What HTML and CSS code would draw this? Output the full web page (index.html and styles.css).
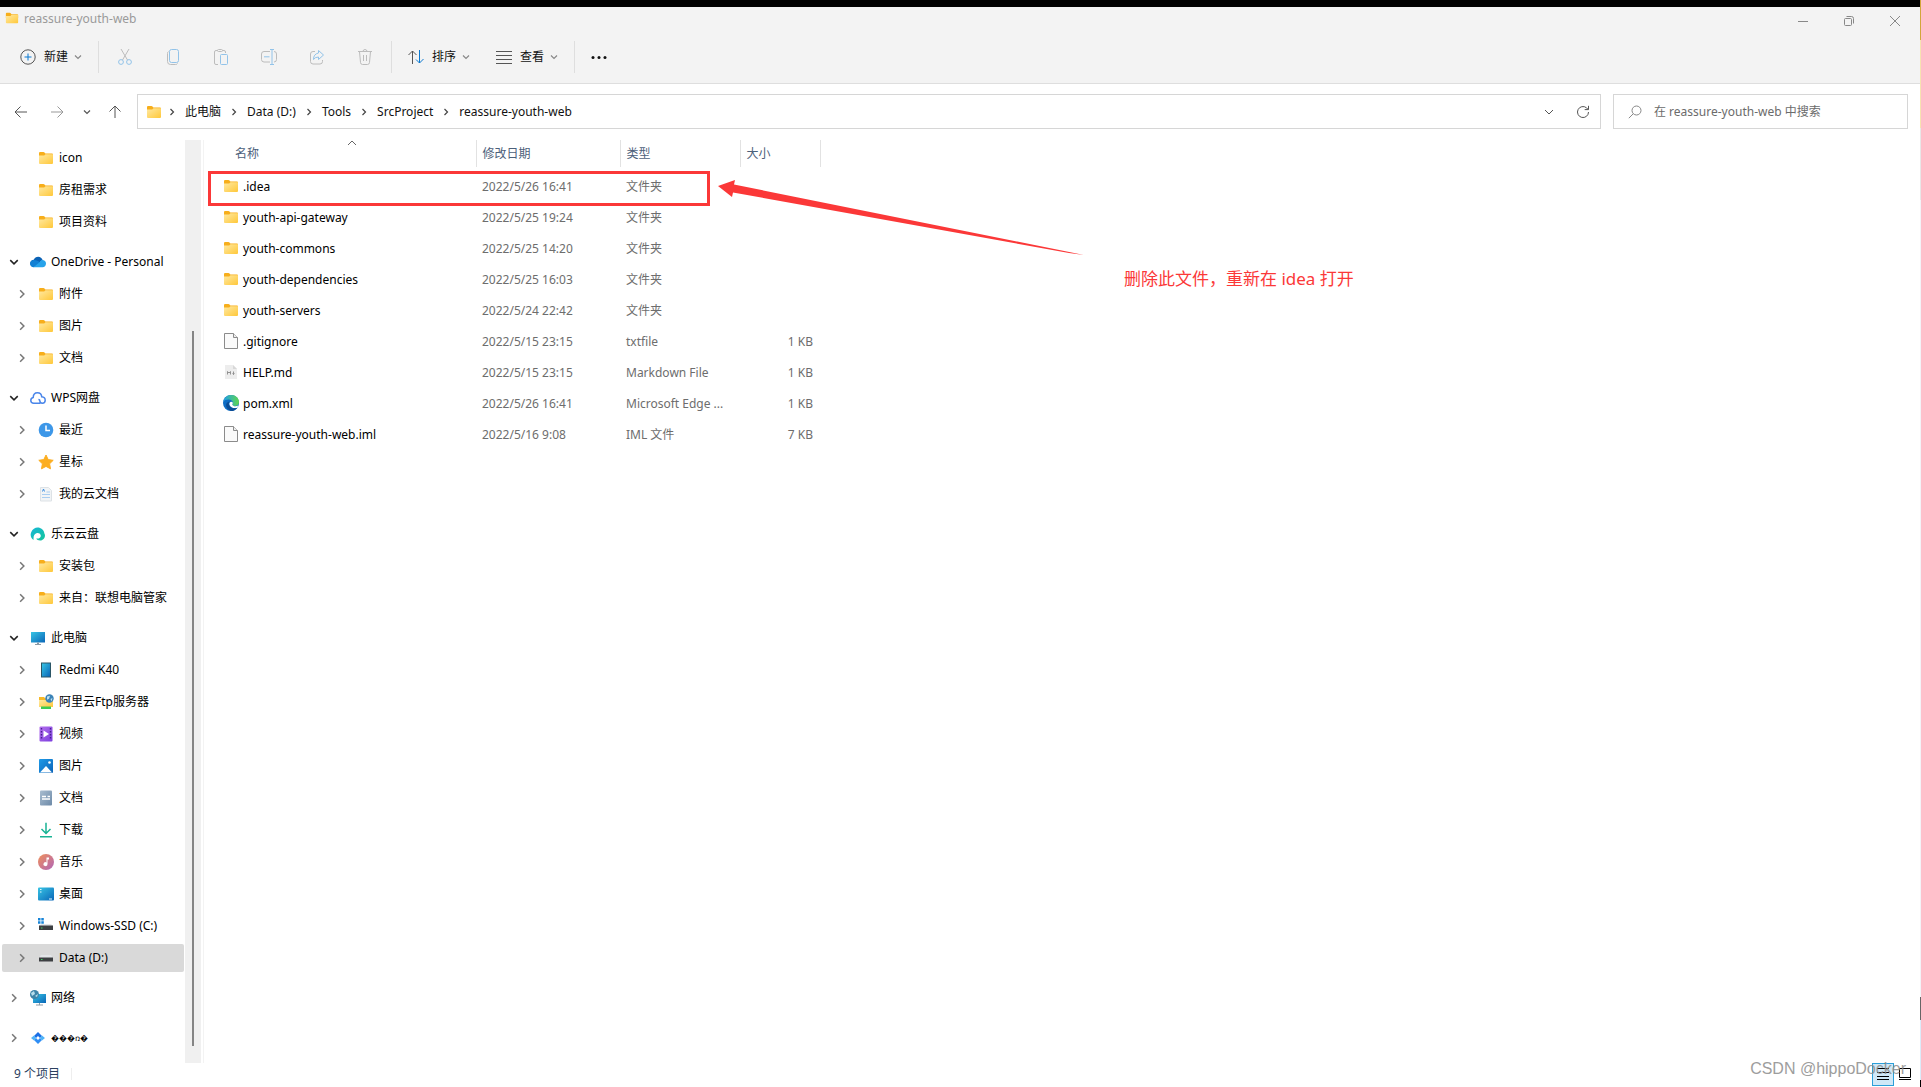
FILE: index.html
```html
<!DOCTYPE html>
<html lang="zh-CN">
<head>
<meta charset="utf-8">
<title>reassure-youth-web</title>
<link rel="stylesheet" href="styles.css">
</head>
<body>
<svg class="sprite" aria-hidden="true">
  <defs>
    <linearGradient id="gFolder" x1="0" y1="0" x2="1" y2="1"><stop offset="0" stop-color="#ffe9a2"/><stop offset="1" stop-color="#ffc83a"/></linearGradient>
    <linearGradient id="gBlue" x1="0" y1="0" x2="1" y2="1"><stop offset="0" stop-color="#37c4e4"/><stop offset="1" stop-color="#0a66b8"/></linearGradient>
    <linearGradient id="gSky" x1="0" y1="0" x2="1" y2="1"><stop offset="0" stop-color="#1e9be8"/><stop offset="1" stop-color="#0c63b8"/></linearGradient>
    <linearGradient id="gPurple" x1="0" y1="0" x2="1" y2="1"><stop offset="0" stop-color="#b470ee"/><stop offset="1" stop-color="#7b3ddd"/></linearGradient>
    <linearGradient id="gMusic" x1="0" y1="0" x2="1" y2="1"><stop offset="0" stop-color="#f0905a"/><stop offset="1" stop-color="#b065b8"/></linearGradient>
    <linearGradient id="gTeal" x1="0" y1="0" x2="1" y2="1"><stop offset="0" stop-color="#16b6d8"/><stop offset="1" stop-color="#14c69a"/></linearGradient>
    <linearGradient id="gEdge" x1="0" y1="0" x2="1" y2="0"><stop offset="0" stop-color="#1f9fe6"/><stop offset="1" stop-color="#5fd74e"/></linearGradient>
    <linearGradient id="gSlate" x1="0" y1="0" x2="1" y2="1"><stop offset="0" stop-color="#a9bdd0"/><stop offset="1" stop-color="#6d8aa8"/></linearGradient>
  </defs>
  <symbol id="folder" viewBox="0 0 16 16"><path d="M1 3.200q0-1.200 1-1.200h3.500q.5 0 1 .6l.9 1h6.600q1 0 1 1V8H1z" fill="#f7ae1b"/><path d="M1 5.600h5.200l1.300-1.300H15v8.700q0 .9-1 .9H2q-1 0-1-.9z" fill="url(#gFolder)"/></symbol>
  <symbol id="page" viewBox="0 0 16 16"><path d="M1.500.5h9l4 4v11h-13z" fill="#fafafa" stroke="#8b8b8b"/><path d="M10.500.5v4h4" fill="#eee" stroke="#8b8b8b"/></symbol>
  <symbol id="md" viewBox="0 0 16 16"><path d="M2 1h8l4 4v10H2z" fill="#ededed"/><path d="M10 1v4h4z" fill="#d8d8d8"/><path d="M4.500 10.500v-3l1.500 1.500 1.500-1.500v3M10.500 7.500v3M9.500 9.500l1 1 1-1" fill="none" stroke="#888" stroke-width=".9"/></symbol>
  <symbol id="edge" viewBox="0 0 16 16"><circle cx="8" cy="8" r="8" fill="#0d6cc4"/><path d="M.3 6.500C1.500 2 5 0 8.200 0 13 0 16 3.600 16 7c0 2.500-1.800 4-4 4-1.700 0-2.600-.7-2.600-1.300 0-.4.500-.7.500-1.700C9.900 6 8 4.600 5.600 4.600c-2.300 0-4.300.9-5.300 1.900z" fill="url(#gEdge)"/><path d="M6.500 6.400c-1 1-.9 2.800 0 4.300 1.400 2.300 4.500 3.200 7.800 2.200C12.700 15 10.500 16 8 16c-3-1-5-3.400-4.900-6 .1-1.700 1.400-3.300 3.400-3.600z" fill="#0b4c94"/><path d="M9.300 9.500c.5 1.900 3.500 2.400 6 1l-1 2.200c-3 1-6.400.2-7.600-2.400C6 8.800 6.500 7 8 6.800c1.300-.1 2 .7 1.800 1.500-.2.600-.6.800-.5 1.200z" fill="#fff"/></symbol>
  <symbol id="onedrive" viewBox="0 0 16 16"><path d="M4.500 12.500C1.800 12.500.3 11 .3 9.200c0-2 1.700-3.400 3.400-3.400C4.600 3.800 6.200 2.700 8.200 2.700c2.100 0 3.800 1.300 4.400 3.200z" fill="#0a62b5"/><path d="M3.700 13.300C1.500 13.300 0 11.600 0 9.700 0 7.500 1.700 6 3.700 6c3 0 5.300 1.500 8.900 3.800z" fill="#1180d4"/><path d="M3.500 13.300 9.600 8.200c.9-1.700 2-2.300 3.300-2.200 2 .2 3.100 1.800 3.100 3.600 0 2.200-1.500 3.700-3.400 3.700z" fill="#27a3ea"/></symbol>
  <symbol id="wps" viewBox="0 0 16 16"><path d="M10 13.300H3.700C1.900 13.300.8 12 .8 10.400c0-1.500 1-2.600 2.400-2.900C3.300 4.500 5 2.700 7.400 2.700c2.500 0 4.200 1.800 4.300 4.100 2.100.2 3.500 1.500 3.500 3.400 0 1.600-1.200 2.900-2.900 3.100-1.400 0-2.400-1-2.400-2.200 0-1-.7-1.600-1.500-1.600" fill="none" stroke="#4a86ea" stroke-width="1.500"/></symbol>
  <symbol id="recent" viewBox="0 0 16 16"><circle cx="8" cy="8" r="7.300" fill="#3d97e8"/><path d="M8 3.500V8.500h4" fill="none" stroke="#fff" stroke-width="1.500"/></symbol>
  <symbol id="star" viewBox="0 0 16 16"><path d="m8 1 2.200 4.600 5 .7-3.600 3.500.9 5L8 12.400l-4.500 2.400.9-5L.8 6.300l5-.7z" fill="#fcae21" stroke="#fcae21" stroke-linejoin="round"/></symbol>
  <symbol id="clouddoc" viewBox="0 0 16 16"><path d="M2.500 1.500h8l3 3v10.500h-11z" fill="#f1f4f6" stroke="#dde2e6"/><path d="M4.500 5.500l1-2.500 1 2.500" stroke="#3b8de0" fill="none"/><path d="M8.500 6H12M4 8.500h8M4 11.500h8" stroke="#a9cdf0" fill="none"/></symbol>
  <symbol id="leyun" viewBox="0 0 16 16"><path d="M3.600 14C.8 12.500-.1 9 1.300 5.900 2.800 2.500 6.300.8 9.500 1.800c3 1 4.700 3.300 4.900 5.700 1.600 2.500-.3 6.800-3.400 6.900-2.300.3-4.200-.5-4.800-1.900 3.200.5 5-1.100 4.500-3.200-.5-1.900-2.500-2.700-4.300-2C4.200 8 3.200 10.500 3.600 14z" fill="url(#gTeal)"/></symbol>
  <symbol id="pc" viewBox="0 0 16 16"><path d="M1 2h14v10.500H1z" fill="url(#gBlue)"/><path d="M7 12.500h2V14h2v1H5v-1h2z" fill="#8b9aa6"/></symbol>
  <symbol id="phone" viewBox="0 0 16 16"><path d="M3 .5h10v15H3z" fill="#2b5566"/><path d="M4 1.500h8v13H4z" fill="url(#gBlue)"/></symbol>
  <symbol id="ftp" viewBox="0 0 16 16"><path d="M1 3h5l1.500 1.500H14V12H1z" fill="#f7b928"/><path d="M1 6h14v7H1z" fill="url(#gFolder)"/><path d="M3 12.500h10V15H3z" fill="#3ecb52"/><circle cx="11.500" cy="4.500" r="4.200" fill="#3b83b8"/><path d="M9 2.500l3-.8-1 3-2 1zM12.500 5l2-1-1 3.500z" fill="#bfe0ee"/></symbol>
  <symbol id="video" viewBox="0 0 16 16"><rect x="1.500" y=".5" width="13" height="15" rx="1" fill="url(#gPurple)"/><path d="M3.500 2v12M12.500 2v12" stroke="#45208c" stroke-width="1.400" stroke-dasharray="1.500 1.500"/><path d="M5.500 4.500l5.500 3.500-5.500 3.500z" fill="#fff"/></symbol>
  <symbol id="image" viewBox="0 0 16 16"><rect x="1" y="1" width="14" height="14" rx="1" fill="url(#gSky)"/><path d="M2 14.500 8 8l6 6.500z" fill="#fff"/><circle cx="11.500" cy="4.500" r="1.300" fill="#fff"/></symbol>
  <symbol id="docs" viewBox="0 0 16 16"><rect x="2" y=".5" width="12" height="15" rx="1" fill="url(#gSlate)"/><path d="M4 6.500h4M4 9h8M9.500 6.500H12" stroke="#fff" stroke-width="1.500"/></symbol>
  <symbol id="download" viewBox="0 0 16 16"><path d="M8 .8v10.500M3.500 7 8 11.500 12.500 7M2 14.800h12" fill="none" stroke="#18b394" stroke-width="1.500"/></symbol>
  <symbol id="music" viewBox="0 0 16 16"><circle cx="8" cy="8" r="8" fill="url(#gMusic)"/><path d="M8.500 3.500h2.500v2H9.500V10a2 2 0 1 1-1-1.600z" fill="#fff"/></symbol>
  <symbol id="desktop" viewBox="0 0 16 16"><rect y="1.500" width="16" height="13" rx="1" fill="url(#gBlue)"/><path d="M2 3.500h1.500M2 6h1.500M11 13h3" stroke="#e4f7fc"/></symbol>
  <symbol id="drive" viewBox="0 0 16 16"><path d="M3 5h10l2 3H1z" fill="#e3e5e8"/><path d="M1 7.500h14V11.500H1z" fill="#3d3f42"/><path d="M3 9.500h1.500" stroke="#45d167"/></symbol>
  <symbol id="windrive" viewBox="0 0 16 16"><path d="M3 6h10l2 2H1z" fill="#e3e5e8"/><path d="M1 7.500h14V12H1z" fill="#3d3f42"/><path d="M3 10h1.500" stroke="#45d167"/><path d="M0 0h2.500v2.500H0zM3.300 0h2.500v2.500H3.300zM0 3.300h2.500v2.500H0zM3.300 3.300h2.500v2.500H3.300z" fill="#1684d8"/></symbol>
  <symbol id="network" viewBox="0 0 16 16"><path d="M3 4h13v9H3z" fill="url(#gBlue)"/><path d="M6 15h7M9.500 13v2" stroke="#8b9aa6"/><circle cx="4.500" cy="4.500" r="4.500" fill="#3e84a8"/><path d="M1 3l3-2 1 3-3 2zM5 6l3-2-1 3z" fill="#b9dfec"/></symbol>
  <symbol id="diamond" viewBox="0 0 16 16"><path d="M8 2 12 6 10 8 8 6 6 8 4 6z" fill="#1a6fe6"/><path d="M8 14 4 10 6 8 8 10 10 8 12 10z" fill="#2f8ef5"/><path d="M4 5.500 6 8 4 10.500 1 8zM12 5.500 15 8 12 10.500 10 8z" fill="#4fb3f7"/></symbol>
  <symbol id="down" viewBox="0 0 8 8"><path d="M1 2.500 4 5.500 7 2.500" fill="none" stroke="currentColor" stroke-width="1.200"/></symbol>
  <symbol id="right" viewBox="0 0 8 8"><path d="M2.500 1 5.500 4 2.500 7" fill="none" stroke="currentColor" stroke-width="1.200"/></symbol>
</svg>

<header class="titlebar">
  <svg class="i14"><use href="#folder"/></svg>
  <h1>reassure-youth-web</h1>
  <div class="winbtns">
    <button aria-label="最小化"><svg class="i12" viewBox="0 0 12 12"><path d="M1 6.500h10"/></svg></button>
    <button aria-label="还原"><svg class="i12" viewBox="0 0 12 12"><rect x="1.500" y="3.500" width="7" height="7" rx="1"/><path d="M3.500 1.500h5q2 0 2 2v5"/></svg></button>
    <button aria-label="关闭"><svg class="i12" viewBox="0 0 12 12"><path d="M1 1l10 10M11 1 1 11"/></svg></button>
  </div>
</header>

<div class="toolbar" role="toolbar">
  <div class="group">
    <button class="cmd"><svg class="i16" viewBox="0 0 16 16"><circle cx="8" cy="8" r="7.200"/><path class="blue" d="M8 4.500v7M4.500 8h7"/></svg>新建<svg class="i8"><use href="#down"/></svg></button>
  </div>
  <div class="group icons">
    <button aria-label="剪切"><svg class="i16" viewBox="0 0 16 16"><path d="M4 0l6.500 11M12 0 5.500 11"/><circle class="blue" cx="4" cy="13" r="2.400"/><circle class="blue" cx="12" cy="13" r="2.400"/></svg></button>
    <button aria-label="复制"><svg class="i16" viewBox="0 0 16 16"><path d="M3.500 2.500q-1 .5-1 2v8q0 3 3 3h5q1.500 0 2-1"/><rect class="blue" x="4.500" y=".5" width="9" height="13" rx="2"/></svg></button>
    <button aria-label="粘贴"><svg class="i16" viewBox="0 0 16 16"><path d="M5 15.500H3q-1.500 0-1.500-1.500V3q0-1.500 1.500-1.500h1.500M9.500 1.500H11q1.500 0 1.500 1.500v1"/><rect x="4.500" y=".5" width="5" height="2" rx="1"/><rect class="blue" x="7.500" y="5.500" width="7" height="10" rx="1"/></svg></button>
    <button aria-label="重命名"><svg class="i16" viewBox="0 0 16 16"><path d="M9 2.500H3q-2.500 0-2.500 2.500v5.500Q.5 13 3 13h6M13 2.500q2.500 0 2.500 2.500v5.500q0 2.500-2.500 2.500"/><path class="blue" d="M9 .5h4M9 15.500h4M11 .5v15M3 7.800h5.500"/></svg></button>
    <button aria-label="共享"><svg class="i16" viewBox="0 0 16 16"><path d="M6 2.500H4Q1.500 2.500 1.500 5v7.500q0 2.500 2.500 2.500h7q2.500 0 2.500-2.500V11"/><path class="blue" d="M9.500 1.500l5 4.500-5 4.500V8Q6 8 4.500 10.500 4.500 5 9.500 4z"/></svg></button>
    <button aria-label="删除"><svg class="i16" viewBox="0 0 16 16"><path d="M1 2.500h14M6 2.500q0-2 2-2t2 2M2.500 2.500l1 11q.2 2 2 2h5q1.800 0 2-2l1-11M6.500 6v6M9.500 6v6"/></svg></button>
  </div>
  <div class="group">
    <button class="cmd"><svg class="i16" viewBox="0 0 16 16"><path d="M4.500 15V2M.5 6l4-4 4 4"/><path class="blue" d="M11.500 1v13M8 10.500l3.500 3.500 4-4"/></svg>排序<svg class="i8"><use href="#down"/></svg></button>
    <button class="cmd"><svg class="i16" viewBox="0 0 16 16"><path d="M0 2.500h16M0 6.500h16M0 10.500h16M0 14.500h16"/></svg>查看<svg class="i8"><use href="#down"/></svg></button>
  </div>
  <div class="group">
    <button class="more" aria-label="更多"><svg class="i16" viewBox="0 0 16 16"><circle cx="2" cy="8.500" r="1.500"/><circle cx="8" cy="8.500" r="1.500"/><circle cx="14" cy="8.500" r="1.500"/></svg></button>
  </div>
</div>

<div class="navrow">
  <div class="navbtns">
    <button aria-label="后退"><svg class="i14" viewBox="0 0 14 14"><path d="M13 7H1M6.500 1.500 1 7l5.500 5.500"/></svg></button>
    <button class="off" aria-label="前进"><svg class="i14" viewBox="0 0 14 14"><path d="M1 7h12M7.500 1.500 13 7l-5.500 5.500"/></svg></button>
    <button class="slim" aria-label="最近位置"><svg class="i8"><use href="#down"/></svg></button>
    <button aria-label="上移"><svg class="i14" viewBox="0 0 14 14"><path d="M7 13V1M1.500 6.500 7 1l5.500 5.500"/></svg></button>
  </div>
  <nav class="address" aria-label="地址">
    <svg class="i16"><use href="#folder"/></svg>
    <svg class="i8"><use href="#right"/></svg><a href="#">此电脑</a>
    <svg class="i8"><use href="#right"/></svg><a href="#">Data (D:)</a>
    <svg class="i8"><use href="#right"/></svg><a href="#">Tools</a>
    <svg class="i8"><use href="#right"/></svg><a href="#">SrcProject</a>
    <svg class="i8"><use href="#right"/></svg><a href="#">reassure-youth-web</a>
    <div class="addrend">
      <button aria-label="历史"><svg class="i12" viewBox="0 0 12 12"><path d="M2 4l4 4 4-4"/></svg></button>
      <button aria-label="刷新"><svg class="i14" viewBox="0 0 14 14"><path d="M12.500 7A5.500 5.500 0 1 1 10.500 2.800L12 4.300M12.500.8v3.800H8.700"/></svg></button>
    </div>
  </nav>
  <label class="search">
    <svg class="i14" viewBox="0 0 14 14"><circle cx="8.500" cy="5.500" r="4.500"/><path d="M5.200 8.800.8 13.200"/></svg>
    <input type="search" aria-label="搜索" placeholder="在 reassure-youth-web 中搜索">
  </label>
</div>

<div class="content">
  <aside class="side">
    <ul class="tree">
      <li class="child"><svg class="tw"></svg><svg class="i16"><use href="#folder"/></svg>icon</li>
      <li class="child"><svg class="tw"></svg><svg class="i16"><use href="#folder"/></svg>房租需求</li>
      <li class="child"><svg class="tw"></svg><svg class="i16"><use href="#folder"/></svg>项目资料</li>
      <li class="root open"><svg class="tw"><use href="#down"/></svg><svg class="i16"><use href="#onedrive"/></svg>OneDrive - Personal</li>
      <li class="child"><svg class="tw"><use href="#right"/></svg><svg class="i16"><use href="#folder"/></svg>附件</li>
      <li class="child"><svg class="tw"><use href="#right"/></svg><svg class="i16"><use href="#folder"/></svg>图片</li>
      <li class="child"><svg class="tw"><use href="#right"/></svg><svg class="i16"><use href="#folder"/></svg>文档</li>
      <li class="root open"><svg class="tw"><use href="#down"/></svg><svg class="i16"><use href="#wps"/></svg>WPS网盘</li>
      <li class="child"><svg class="tw"><use href="#right"/></svg><svg class="i16"><use href="#recent"/></svg>最近</li>
      <li class="child"><svg class="tw"><use href="#right"/></svg><svg class="i16"><use href="#star"/></svg>星标</li>
      <li class="child"><svg class="tw"><use href="#right"/></svg><svg class="i16"><use href="#clouddoc"/></svg>我的云文档</li>
      <li class="root open"><svg class="tw"><use href="#down"/></svg><svg class="i16"><use href="#leyun"/></svg>乐云云盘</li>
      <li class="child"><svg class="tw"><use href="#right"/></svg><svg class="i16"><use href="#folder"/></svg>安装包</li>
      <li class="child"><svg class="tw"><use href="#right"/></svg><svg class="i16"><use href="#folder"/></svg>来自：联想电脑管家</li>
      <li class="root open"><svg class="tw"><use href="#down"/></svg><svg class="i16"><use href="#pc"/></svg>此电脑</li>
      <li class="child"><svg class="tw"><use href="#right"/></svg><svg class="i16"><use href="#phone"/></svg>Redmi K40</li>
      <li class="child"><svg class="tw"><use href="#right"/></svg><svg class="i16"><use href="#ftp"/></svg>阿里云Ftp服务器</li>
      <li class="child"><svg class="tw"><use href="#right"/></svg><svg class="i16"><use href="#video"/></svg>视频</li>
      <li class="child"><svg class="tw"><use href="#right"/></svg><svg class="i16"><use href="#image"/></svg>图片</li>
      <li class="child"><svg class="tw"><use href="#right"/></svg><svg class="i16"><use href="#docs"/></svg>文档</li>
      <li class="child"><svg class="tw"><use href="#right"/></svg><svg class="i16"><use href="#download"/></svg>下载</li>
      <li class="child"><svg class="tw"><use href="#right"/></svg><svg class="i16"><use href="#music"/></svg>音乐</li>
      <li class="child"><svg class="tw"><use href="#right"/></svg><svg class="i16"><use href="#desktop"/></svg>桌面</li>
      <li class="child"><svg class="tw"><use href="#right"/></svg><svg class="i16"><use href="#windrive"/></svg>Windows-SSD (C:)</li>
      <li class="child selected"><svg class="tw"><use href="#right"/></svg><svg class="i16"><use href="#drive"/></svg>Data (D:)</li>
      <li class="root"><svg class="tw"><use href="#right"/></svg><svg class="i16"><use href="#network"/></svg>网络</li>
      <li class="root"><svg class="tw"><use href="#right"/></svg><svg class="i16"><use href="#diamond"/></svg><span class="garbled">���ռ�</span></li>
    </ul>
    <div class="scroll"><div class="thumb"></div></div>
  </aside>

  <main class="pane">
    <table class="files">
      <colgroup><col class="c-name"><col class="c-date"><col class="c-type"><col class="c-size"></colgroup>
      <thead>
        <tr><th>名称<svg class="sort" viewBox="0 0 10 6"><path d="M1 5 5 1l4 4"/></svg></th><th>修改日期</th><th>类型</th><th>大小</th></tr>
      </thead>
      <tbody>
        <tr><td><svg class="i16"><use href="#folder"/></svg>.idea</td><td>2022/5/26 16:41</td><td>文件夹</td><td></td></tr>
        <tr><td><svg class="i16"><use href="#folder"/></svg>youth-api-gateway</td><td>2022/5/25 19:24</td><td>文件夹</td><td></td></tr>
        <tr><td><svg class="i16"><use href="#folder"/></svg>youth-commons</td><td>2022/5/25 14:20</td><td>文件夹</td><td></td></tr>
        <tr><td><svg class="i16"><use href="#folder"/></svg>youth-dependencies</td><td>2022/5/25 16:03</td><td>文件夹</td><td></td></tr>
        <tr><td><svg class="i16"><use href="#folder"/></svg>youth-servers</td><td>2022/5/24 22:42</td><td>文件夹</td><td></td></tr>
        <tr><td><svg class="i16"><use href="#page"/></svg>.gitignore</td><td>2022/5/15 23:15</td><td>txtfile</td><td>1 KB</td></tr>
        <tr><td><svg class="i16"><use href="#md"/></svg>HELP.md</td><td>2022/5/15 23:15</td><td>Markdown File</td><td>1 KB</td></tr>
        <tr><td><svg class="i16"><use href="#edge"/></svg>pom.xml</td><td>2022/5/26 16:41</td><td>Microsoft Edge ...</td><td>1 KB</td></tr>
        <tr><td><svg class="i16"><use href="#page"/></svg>reassure-youth-web.iml</td><td>2022/5/16 9:08</td><td>IML 文件</td><td>7 KB</td></tr>
      </tbody>
    </table>
    <div class="box"></div>
    <svg class="arrow" viewBox="0 0 366 76"><path d="M0 6 17 0l-1 4.500L366 75 351 73 15 12.500 14 17z"/></svg>
    <p class="note">删除此文件，重新在 idea 打开</p>
  </main>
</div>

<footer class="status">
  <span class="count">9 个项目</span>
  <div class="views">
    <button class="on" aria-label="详细信息"><svg viewBox="0 0 14 14"><path d="M1 1.500h12M1 5.500h12M1 9.500h12M1 12.500h12"/></svg></button>
    <button aria-label="大图标"><svg viewBox="0 0 14 14"><path d="M1.500 1.500h11v9h-11zM1 12.500h12"/></svg></button>
  </div>
  <span class="mark">CSDN @hippoDocker</span>
</footer>
<div class="behind"></div>
</body>
</html>
```

FILE: styles.css
```css
* { box-sizing: border-box; }
body {
  margin: 0;
  min-height: 100vh;
  display: flex;
  flex-direction: column;
  position: relative;
  background: #fff;
  color: #1a1a1a;
  font: 12px/16px "Noto Sans", "Noto Sans CJK SC", sans-serif;
}
.sprite { position: absolute; width: 0; height: 0; }
svg { flex: none; fill: none; stroke: none; display: block; }
.i8 { width: 8px; height: 8px; }
.i12 { width: 12px; height: 12px; }
.i14 { width: 14px; height: 14px; }
.i16 { width: 16px; height: 16px; }
button { border: 0; padding: 0; background: none; color: inherit; font: inherit; display: flex; align-items: center; justify-content: center; }
button svg, .search svg { stroke: #555; }

.titlebar { height: 35px; border-top: 7px solid #000; background: #f3f3f3; display: flex; padding-left: 5px; }
.titlebar > svg { margin-top: 4px; }
.titlebar h1 { margin: 4px 0 0 5px; font: inherit; color: #9a9a9a; }
.winbtns { margin-left: auto; display: flex; padding-right: 3px; }
.winbtns button { width: 46px; height: 28px; }
.winbtns svg { stroke: #888; }

.toolbar { height: 49px; border-bottom: 1px solid #dedede; background: #f3f3f3; display: flex; align-items: center; padding: 0 0 4px 12px; }
.group { display: flex; height: 32px; }
.group + .group { border-left: 1px solid #dedede; }
.cmd { padding: 0 16px 0 8px; gap: 8px; color: #111; }
.group + .group .cmd { padding: 0 16px; }
.group .cmd + .cmd { padding-left: 8px; }
.cmd .i8 { stroke: none; color: #888; margin-left: -2px; }
.toolbar .blue { stroke: #0a78d0; }
.icons { padding: 0 2px; }
.icons button { width: 48px; }
.icons svg { stroke: #bcbcbc; }
.icons .blue { stroke: #92c3e9; }
.group + .group .cmd + .cmd { padding: 0 16px 0 10px; }
.more { width: 48px; }
.more svg { fill: #111; stroke: none; }

.navrow { display: flex; align-items: center; padding: 10px 13px 11px 7px; }
.navbtns { display: flex; width: 130px; }
.navbtns button { width: 28px; height: 28px; margin-right: 8px; }
.navbtns .slim { width: 16px; margin: 0 6px 0 0; color: #555; }
.navbtns .slim svg { stroke: none; }
.navbtns .off svg { stroke: #999; }
.address { flex: 1; height: 35px; border: 1px solid #d6d6d6; display: flex; align-items: center; padding-left: 8px; color: #444; }
.address > .i16 { margin-right: 2px; }
.address > .i8 { margin: 0 9px 0 4px; }
.address a { color: #111; text-decoration: none; margin-right: 5px; }
.addrend { margin-left: auto; display: flex; }
.addrend button { width: 34px; height: 32px; }
.search { width: 295px; height: 35px; margin-left: 12px; border: 1px solid #d6d6d6; display: flex; align-items: center; gap: 12px; padding: 0 12px 0 14px; }
.search svg { stroke: #888; }
.search input { flex: 1; min-width: 0; border: 0; padding: 0; outline: 0; font: inherit; color: #111; }
.search input::placeholder { color: #6b6b6b; opacity: 1; }

.content { flex: 1; display: flex; }
.side { width: 204px; display: flex; border-right: 1px solid #f3f3f3; }
.tree { flex: 1; margin: 0; padding: 2px 0 7px; list-style: none; color: #000; }
.tree li { height: 28px; margin: 2px 1px 4px 2px; display: flex; align-items: center; gap: 5px; white-space: nowrap; border-radius: 2px; }
.tree .root { padding-left: 7px; margin-top: 12px; }
.tree .child { padding-left: 15px; }
.tree .i16 { margin-left: 6px; }
.tw { width: 10px; height: 10px; color: #777; }
.open .tw { color: #222; }
.tree .selected { background: #d9d9d9; }
.garbled { font-size: 8px; }
.scroll { width: 16px; margin-right: 2px; background: #f0f0f0; display: flex; justify-content: center; padding: 191px 0 17px; }
.thumb { width: 2px; background: #858585; }

.pane { flex: 1; position: relative; padding-left: 2px; }
.files { width: 614px; table-layout: fixed; border-collapse: collapse; color: #6d6d6d; }
.c-name { width: 270px; }
.c-date { width: 144px; }
.c-type { width: 120px; }
.c-size { width: 80px; }
.files th { height: 27px; padding: 0 0 0 6px; text-align: left; font-weight: 400; color: #4c607a; border-right: 1px solid #e2e2e2; position: relative; }
.files th:first-child { padding-left: 29px; }
.files thead::after { content: ""; display: table-row; height: 4px; }
.sort { position: absolute; left: 141px; top: 0; width: 10px; height: 6px; stroke: #666; }
.files td { height: 31px; padding: 0 7px 0 6px; white-space: nowrap; }
.files td:first-child { padding-left: 17px; color: #000; }
.files td:first-child svg { display: inline-block; vertical-align: -3px; margin-right: 4px; }
.files td:last-child { text-align: right; }
.box { position: absolute; left: 4px; top: 31px; width: 502px; height: 35px; border: 3px solid #fb3838; }
.arrow { position: absolute; left: 514px; top: 40px; width: 366px; height: 76px; fill: #fb3838; }
.note { position: absolute; left: 920px; top: 127px; margin: 0; font-size: 17px; line-height: 24px; color: #fb3838; white-space: nowrap; }

.status { height: 24px; display: flex; align-items: center; padding: 0 5px 2px 14px; position: relative; color: #2b4060; }
.count { padding-right: 11px; border-right: 1px solid #eee; line-height: 12px; }
.views { margin-left: auto; display: flex; }
.views button { width: 22px; height: 23px; }
.views svg { width: 14px; height: 14px; stroke: #000; }
.views .on { background: #cfe8f7; border: 1px solid #2b9fd9; }
.mark { position: absolute; right: 15px; bottom: 8px; font: 16px/20px "Liberation Sans", sans-serif; color: #8d8d8d; opacity: .85; }
.behind { position: absolute; right: 0; top: 0; bottom: 0; width: 1px; background: linear-gradient(#d2a63a 40px, #f7e3b0 40px 128px, #e8e8e8 128px 200px, #f3f4f8 200px 997px, #666 997px 1020px, #dcecfa 1020px 1080px, #000 1080px); }
```
